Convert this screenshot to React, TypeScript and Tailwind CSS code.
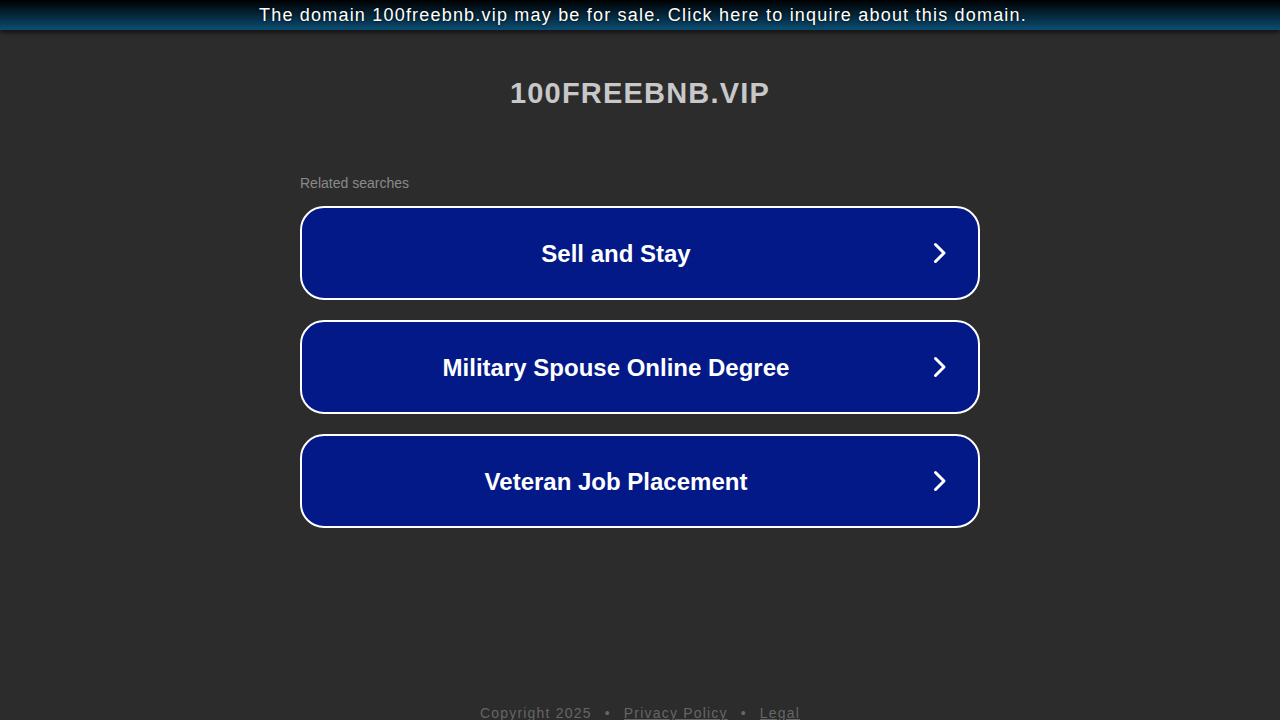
const SEARCHES = ["Sell and Stay", "Military Spouse Online Degree", "Veteran Job Placement"];

function Chevron() {
  return (
    <svg width="16" height="24" viewBox="0 0 16 24" fill="none" className="shrink-0">
      <polyline points="3.5,3.5 12,12 3.5,20.5" stroke="white" strokeWidth="3" strokeLinecap="round" strokeLinejoin="round" />
    </svg>
  );
}

export default function App() {
  return (
    <div className="flex h-[720px] flex-col bg-[#2c2c2c] font-['Liberation_Sans',Arial,sans-serif]">
      {/* sale banner */}
      <div className="relative z-10 flex h-[30px] items-center justify-center bg-[linear-gradient(#000000,#0b4d73)] pl-[6px] shadow-[0_2px_5px_rgba(0,0,0,0.7)]">
        <a className="text-[18px] tracking-[1.2px] text-white [text-shadow:0_0_3px_#000]">
          The domain 100freebnb.vip may be for sale. Click here to inquire about this domain.
        </a>
      </div>

      <h1 className="mt-[45px] text-center text-[29px] font-bold leading-[36px] tracking-[1.2px] text-[#c8c8c8]">
        100FREEBNB.VIP
      </h1>

      <div className="mx-auto mt-[64px] w-[680px]">
        <p className="text-[14px] leading-[16px] text-[#8a8a8a]">Related searches</p>
        <div className="mt-[15px] flex flex-col gap-[20px]">
          {SEARCHES.map(s => (
            <a
              key={s}
              className="flex h-[94px] items-center rounded-[24px] border-2 border-white bg-[#021987] pr-[30px]"
            >
              <span className="flex-1 pr-[2px] pt-[2px] text-center text-[24px] font-bold text-white">{s}</span>
              <Chevron />
            </a>
          ))}
        </div>
      </div>

      <div className="mt-auto flex justify-center gap-[13px] text-[14px] leading-[16px] tracking-[1.2px] text-[#666666] translate-y-[1px]">
        <span>Copyright 2025</span>
        <span>•</span>
        <a className="underline">Privacy Policy</a>
        <span>•</span>
        <a className="underline">Legal</a>
      </div>
    </div>
  );
}
